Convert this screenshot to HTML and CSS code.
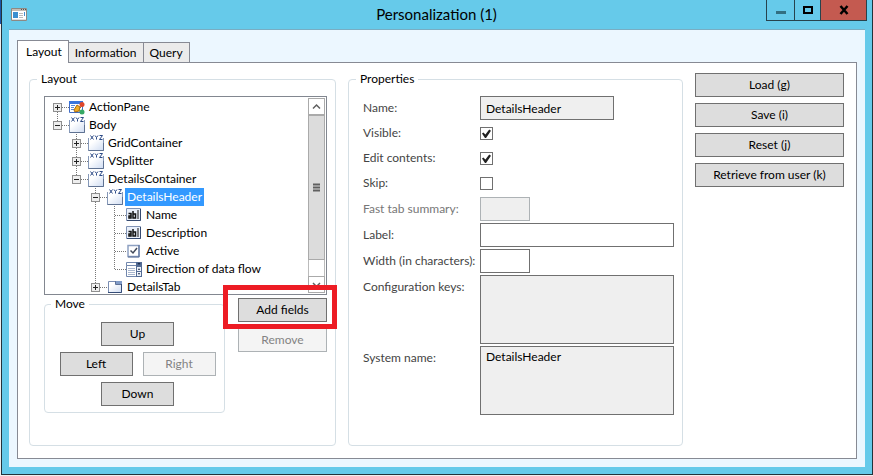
FILE: index.html
```html
<!DOCTYPE html>
<html lang="en">
<head>
<meta charset="utf-8">
<title>Personalization (1)</title>
<link rel="stylesheet" href="styles.css">
</head>
<body>
<svg class="defs" aria-hidden="true">
  <defs>
    <linearGradient id="sheet" x1="0" y1="0" x2="1" y2="1"><stop offset="0.3" stop-color="#fff"/><stop offset="1" stop-color="#cfdcf2"/></linearGradient>
    <symbol id="xyz" viewBox="0 0 16 16">
      <path d="M.5 3v12.500h15V3" fill="url(#sheet)" stroke="#8598b8"/>
      <path d="M.5 15.500h15V8" fill="none" stroke="#5f7292"/>
      <path d="M2.500 0.500l3 4M5.500 .5l-3 4M7 .5l1.500 2L10 .5M8.500 2.500v2M11.500 .5h3l-3 4h3" fill="none" stroke="#2c4a86"/>
    </symbol>
    <symbol id="edit" viewBox="0 0 16 16">
      <path d="M.5 1.500h14v12H.5z" fill="#eaf0fa" stroke="#8093b5"/>
      <path d="M1 13.500h13.500V2" fill="none" stroke="#354a70"/>
      <path d="M2.500 6.500h2.500v4.500H3V9h2M7 4v7H9.500V7H7" fill="none" stroke="#111" stroke-width="1.500"/>
      <path d="M12 3v9" stroke="#111"/>
    </symbol>
    <symbol id="check" viewBox="0 0 16 16">
      <path d="M2 2.500h11v11H2z" fill="#fff" stroke="#8ea1c2" stroke-width="1.500"/>
      <path d="M13 2v12H2" fill="none" stroke="#546b94"/>
      <path d="M4.500 7.500l2.500 2.500 4-5" fill="none" stroke="#424a5a" stroke-width="1.500"/>
    </symbol>
    <symbol id="combo" viewBox="0 0 16 16">
      <path d="M.5 1.500h15v3H.5z" fill="#fff" stroke="#7187ad"/>
      <path d="M.5 4.500h10v11H.5z" fill="#fff" stroke="#7187ad"/>
      <path d="M10 1h6v15h-6z" fill="#536b94"/>
      <path d="M11 6h4v4h-4zM11 11h4v4h-4z" fill="#edf2fa"/>
      <path d="M11.500 2h3L13 4zM12 9l1-2 1 2zM12 12h2l-1 2z" fill="#1d2c49"/>
      <path d="M2 7.500h7M2 9.500h7M2 11.500h7M2 13.500h7" stroke="#a8b6ce"/>
    </symbol>
    <symbol id="tab" viewBox="0 0 16 16">
      <path d="M1.500 2.500h13v11h-13z" fill="url(#sheet)" stroke="#7a8eb4"/>
      <path d="M9 2h6v3H9z" fill="#809bc8"/>
      <path d="M8.500 2v3.500h6" fill="none" stroke="#5e7298"/>
      <path d="M1 13.500h13.500V5" fill="none" stroke="#354c77"/>
    </symbol>
    <symbol id="pane" viewBox="0 0 16 16">
      <path d="M.5 2.500h13v11H.5z" fill="#fff" stroke="#416cc5"/>
      <path d="M0 2h14v3H0z" fill="#3975dc"/>
      <path d="M2 6.500h4M2 8.500h3M2 10.500h3" stroke="#5989d7"/>
      <path d="M11 9l2-3M9 11l3 2" stroke="#7b4b20"/>
      <path d="M8 6l3 2-1 4-4 1-1-2z" fill="#f1ac24" stroke="#a56a10"/>
      <circle cx="13" cy="5.500" r="2.500" fill="#df472b"/><circle cx="13" cy="13" r="2.500" fill="#35a863"/>
    </symbol>
  </defs>
</svg>
<main class="window">
  <header class="titlebar">
    <svg class="app-icon" viewBox="0 0 16 13"><path d="M.5.500h15v12H.5z" fill="#fff" stroke="#8d8983"/><path d="M1 1h14v2H1z" fill="#c4bdb5"/><path d="M10 1.500h1M12 1.500h1M14 1.500h1" stroke="#555"/><path d="M2 4h5v6H2z" fill="#3b8fd0"/><path d="M8 5.500h4M8 7.500h4M8 9.500h4" stroke="#bbb"/><path d="M13.500 4v4" stroke="#438ed0"/><path d="M1 11.500h14" stroke="#ddd"/></svg>
    <h1>Personalization (1)</h1>
    <div class="controls">
      <button aria-label="Minimize"><svg viewBox="0 0 10 10"><path d="M0 6h10v3H0z" fill="#326f81"/></svg></button>
      <button class="maximize" aria-label="Maximize"><svg viewBox="0 0 10 10"><path d="M1 2h8v6H1z" fill="none" stroke="#000" stroke-width="2"/></svg></button>
      <button class="close" aria-label="Close"><svg viewBox="0 0 10 10"><path d="M1.500 1l7 8M8.500 1l-7 8" stroke="#000" stroke-width="2.500"/></svg></button>
    </div>
  </header>
  <div class="client">
    <nav class="tabs" role="tablist">
      <button class="active" role="tab" aria-selected="true">Layout</button><button role="tab" aria-selected="false">Information</button><button role="tab" aria-selected="false">Query</button>
    </nav>
    <section class="panel">
      <fieldset class="layout">
        <legend>Layout</legend>
        <div class="tree-box">
          <ul class="tree" role="tree">
            <li><div class="row"><button class="toggle plus" aria-label="Expand"></button><i></i><svg><use href="#pane"/></svg><span>ActionPane</span></div></li>
            <li><div class="row"><button class="toggle" aria-label="Collapse"></button><i></i><svg><use href="#xyz"/></svg><span>Body</span></div>
              <ul>
                <li><div class="row"><button class="toggle plus" aria-label="Expand"></button><i></i><svg><use href="#xyz"/></svg><span>GridContainer</span></div></li>
                <li><div class="row"><button class="toggle plus" aria-label="Expand"></button><i></i><svg><use href="#xyz"/></svg><span>VSplitter</span></div></li>
                <li><div class="row"><button class="toggle" aria-label="Collapse"></button><i></i><svg><use href="#xyz"/></svg><span>DetailsContainer</span></div>
                  <ul>
                    <li><div class="row"><button class="toggle" aria-label="Collapse"></button><i></i><svg><use href="#xyz"/></svg><span class="selected">DetailsHeader</span></div>
                      <ul>
                        <li><div class="row leaf"><i></i><svg><use href="#edit"/></svg><span>Name</span></div></li>
                        <li><div class="row leaf"><i></i><svg><use href="#edit"/></svg><span>Description</span></div></li>
                        <li><div class="row leaf"><i></i><svg><use href="#check"/></svg><span>Active</span></div></li>
                        <li><div class="row leaf"><i></i><svg><use href="#combo"/></svg><span>Direction of data flow</span></div></li>
                      </ul>
                    </li>
                    <li><div class="row"><button class="toggle plus" aria-label="Expand"></button><i></i><svg><use href="#tab"/></svg><span>DetailsTab</span></div></li>
                  </ul>
                </li>
              </ul>
            </li>
          </ul>
          <div class="scrollbar">
            <button aria-label="Scroll up"><svg viewBox="0 0 9 9"><path d="M1 6.500L4.500 3 8 6.500" fill="none" stroke="#606060" stroke-width="1.500"/></svg></button>
            <div class="track"><div class="thumb"><svg viewBox="0 0 9 9"><path d="M1 1.500h7M1 4.500h7M1 7.500h7" stroke="#606060" stroke-width="2"/></svg></div></div>
            <button aria-label="Scroll down"><svg viewBox="0 0 9 9"><path d="M1 3l3.500 3.500L8 3" fill="none" stroke="#606060" stroke-width="1.500"/></svg></button>
          </div>
        </div>
        <div class="actions">
          <fieldset class="move">
            <legend>Move</legend>
            <div class="pad">
              <button class="btn">Up</button>
              <div class="pair"><button class="btn">Left</button><button class="btn" disabled>Right</button></div>
              <button class="btn">Down</button>
            </div>
          </fieldset>
          <div class="fields">
            <div class="highlight"><button class="btn">Add fields</button></div>
            <button class="btn" disabled>Remove</button>
          </div>
        </div>
      </fieldset>
      <fieldset class="properties">
        <legend>Properties</legend>
        <div class="form">
          <label for="name">Name:</label><input class="medium" id="name" value="DetailsHeader" readonly>
          <label for="visible">Visible:</label><input type="checkbox" id="visible" checked>
          <label for="edit-contents">Edit contents:</label><input type="checkbox" id="edit-contents" checked>
          <label for="skip">Skip:</label><input type="checkbox" id="skip">
          <label class="dim" for="summary">Fast tab summary:</label><input class="short" id="summary" disabled>
          <label for="label">Label:</label><input id="label">
          <label for="width">Width (in characters):</label><input class="short" id="width">
          <label for="keys">Configuration keys:</label><textarea id="keys" readonly></textarea>
          <label for="system">System name:</label><textarea id="system" readonly>DetailsHeader</textarea>
        </div>
      </fieldset>
      <div class="commands">
        <button class="btn">Load (g)</button>
        <button class="btn">Save (i)</button>
        <button class="btn">Reset (j)</button>
        <button class="btn">Retrieve from user (k)</button>
      </div>
    </section>
  </div>
</main>
</body>
</html>
```
FILE: styles.css
```css
* { box-sizing: border-box; }

body {
  margin: 0;
  padding: 0 0 1px 1px;
  min-height: 100vh;
  display: flex;
  background: linear-gradient(#1c55a8 24px, #f0f0f0 24px);
  font: 12px/18px Lato, "Open Sans", sans-serif;
  color: #000;
}

button, input, textarea { font: inherit; color: inherit; margin: 0; border-radius: 0; }
button { padding: 0; }
.defs { position: absolute; width: 0; height: 0; }

.window {
  flex: 1;
  display: flex;
  flex-direction: column;
  background: #66caea;
  border: 1px solid #23333b;
  border-top: 0;
}

.titlebar {
  height: 29px;
  display: grid;
  grid-template-columns: 1fr auto 1fr;
  align-items: center;
  padding: 0 10px 0 9px;
}
.titlebar h1 { margin: 0; font-size: 15px; font-weight: 400; line-height: 29px; }
.app-icon { width: 16px; height: 13px; }
.controls { display: flex; justify-content: flex-end; align-self: start; margin-right: -5px; }
.controls button {
  width: 28px;
  height: 21px;
  display: grid;
  place-items: center;
  background: none;
  border: 1px solid #27434d;
  border-width: 0 0 1px 1px;
}
.controls svg { width: 10px; height: 10px; }
.controls .maximize { width: 26px; }
.controls .close { width: 47px; background: #c45a50; border-right-width: 1px; }

.client {
  flex: 1;
  display: flex;
  flex-direction: column;
  margin: 0 7px 7px;
  padding: 10px 8px 8px;
  background: #ecf7ff;
  border-top: 1px solid #79adc2;
}

.tabs { display: flex; align-items: flex-end; height: 22px; }
.tabs button {
  height: 20px;
  line-height: 18px;
  padding: 0 6px;
  background: #ebebeb;
  border: 1px solid #878a94;
  border-width: 1px 1px 0 0;
}
.tabs .active {
  position: relative;
  height: 23px;
  margin-bottom: -1px;
  padding: 0 6px 0 8px;
  background: #fff;
  border-left-width: 1px;
}

.panel {
  flex: 1;
  display: grid;
  grid-template-columns: minmax(0, 307fr) minmax(0, 335fr) 149px;
  gap: 12px;
  padding: 7px 12px 12px 11px;
  background: #fff;
  border: 1px solid #878a94;
}

fieldset { min-width: 0; margin: 0; border: 1px solid #d5dfe5; border-radius: 4px; }
legend { margin-left: -7px; padding: 0 4px; }
.layout { padding: 8px 8px 0 14px; }
.properties { padding: 8px 8px 0 14px; }

.tree-box { display: flex; height: 199px; padding: 1px; border: 1px solid #828790; }
.tree, .tree ul { list-style: none; margin: 0; padding: 0; }
.tree { flex: 1; min-width: 0; overflow: hidden; padding-left: 7px; }
.tree ul { padding-left: 19px; }
.tree li { background: repeating-linear-gradient(#777 0 1px, transparent 1px 2px) 4px 0 / 1px 100% no-repeat; }
.tree li:last-child { background-size: 1px 10px; }
.tree > li:first-child { background-position: 4px 10px; }
.row { display: flex; align-items: center; height: 18px; }
.row i { width: 7px; height: 1px; background: repeating-linear-gradient(90deg, #777 0 1px, transparent 1px 2px); }
.row.leaf i { width: 11px; margin-left: 5px; }
.row svg { width: 16px; height: 16px; margin-right: 2px; }
.row span { padding: 0 2px; white-space: nowrap; }
.row .selected { background: #3399ff; color: #fff; }
.toggle {
  width: 9px;
  height: 9px;
  border: 1px solid #8f8f8f;
  background: linear-gradient(#222, #222) center / 5px 1px no-repeat, #eee;
}
.toggle.plus {
  background: linear-gradient(#222, #222) center / 5px 1px no-repeat,
    linear-gradient(#222, #222) center / 1px 5px no-repeat, #eee;
}

.scrollbar { width: 17px; display: flex; flex-direction: column; }
.scrollbar svg { width: 9px; height: 9px; }
.scrollbar button, .thumb { display: grid; place-items: center; border: 1px solid #aaa; }
.scrollbar button { height: 17px; background: #fff; }
.track { flex: 1; border: 1px solid #bbb; border-width: 0 1px; }
.thumb { height: 90%; margin: 0 -1px; background: #dcdcdc; }

.btn { height: 24px; border: 1px solid #707070; background: #ddd; line-height: 22px; white-space: nowrap; }
.btn:disabled { background: #f4f4f4; border-color: #adb2b5; color: #838383; }

.actions { display: grid; grid-template-columns: minmax(0, 1fr) 89px; gap: 13px; align-items: start; }
.move { padding: 9px 7px 6px 13px; }
.pad { display: flex; flex-direction: column; align-items: center; gap: 6px; }
.pad .btn { width: 73px; }
.pair { display: flex; gap: 10px; }
.fields { display: grid; gap: 6px; padding-top: 3px; }
.fields .btn { width: 100%; }
.highlight { position: relative; display: grid; }
.highlight::after {
  content: "";
  position: absolute;
  inset: -13px -10px -7px -15px;
  border: 5px solid #ed1c24;
  pointer-events: none;
}

.form {
  display: grid;
  grid-template-columns: 117px minmax(0, 1fr);
  grid-template-rows: repeat(3, 25px) repeat(4, 26px) 71px 69px;
  align-items: start;
}
.form label { color: #444; line-height: 24px; white-space: nowrap; }
.form label.dim { color: #777; }
.form input, .form textarea { width: 100%; height: 24px; padding: 0 5px; border: 1px solid #707070; background: #fff; outline: 0; }
.form textarea { height: 69px; padding: 1px 5px; resize: none; display: block; }
.form [readonly], .form :disabled { background: #efefef; }
.form :disabled { border-color: #adb2b5; }
.form .medium { width: 134px; }
.form .short { width: 50px; }
.form [type="checkbox"] { appearance: none; width: 13px; height: 13px; margin-top: 6px; padding: 0; display: grid; place-items: center; }
.form [type="checkbox"]:checked::before {
  content: "";
  width: 9px;
  height: 9px;
  background: #222;
  clip-path: polygon(0 50%, 15% 38%, 38% 62%, 80% 5%, 100% 20%, 45% 100%, 33% 100%);
}

.commands { display: grid; gap: 6px; align-content: start; padding-top: 3px; }
```
